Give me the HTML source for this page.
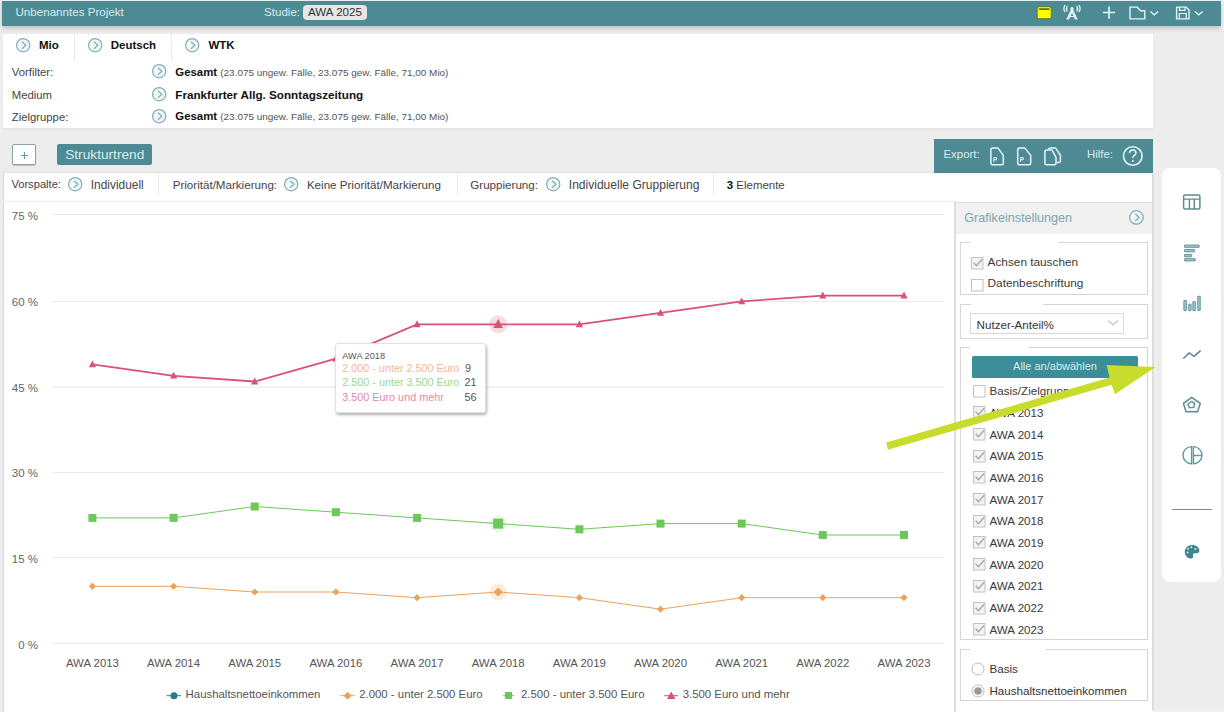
<!DOCTYPE html>
<html><head><meta charset="utf-8">
<style>
*{box-sizing:border-box;margin:0;padding:0}
html,body{width:1224px;height:712px;overflow:hidden;background:#ededed;font-family:"Liberation Sans",sans-serif;color:#333;position:relative;-webkit-font-smoothing:antialiased}
.tx{position:absolute;line-height:1;white-space:nowrap}
.bx{position:absolute}
</style></head><body>
<div class="bx" style="left:0px;top:0px;width:1224px;height:1px;background:#f2f7f7"></div>
<div class="bx" style="left:0px;top:0px;width:2px;height:30px;background:#eef3f3"></div>
<div class="bx" style="left:1221px;top:0px;width:3px;height:30px;background:#f0f5f5"></div>
<div class="bx" style="left:2px;top:1px;width:1219px;height:25px;background:#4e8a93;box-shadow:0 2px 5px rgba(0,0,0,0.22)"></div>
<div class="tx" style="left:15.5px;top:6.48px;font-size:11.6px;color:#d6ecef;font-weight:normal;">Unbenanntes Projekt</div>
<div class="tx" style="left:264px;top:6.48px;font-size:11.6px;color:#d6ecef;font-weight:normal;">Studie:</div>
<div class="bx" style="left:303px;top:5px;width:64px;height:15px;background:#e6e6e6;border-radius:4px"></div>
<div class="tx" style="left:135px;width:400px;text-align:center;top:6.48px;font-size:11.6px;color:#333;font-weight:normal;">AWA 2025</div>
<div class="bx" style="left:3px;top:33.6px;width:1150px;height:94.70000000000002px;background:#fff"></div>
<svg class="bx" style="left:15.3px;top:36.8px" width="16.4" height="16.4" viewBox="-8.2 -8.2 16.4 16.4"><circle r="6.6000000000000005" fill="#ecf8f9" stroke="#8cadb0" stroke-width="1.3"/><path d="M-1.15 -3.53 L2.66 0 L-1.15 3.53" fill="none" stroke="#8cadb0" stroke-width="1.3"/></svg>
<svg class="bx" style="left:86.6px;top:36.8px" width="16.4" height="16.4" viewBox="-8.2 -8.2 16.4 16.4"><circle r="6.6000000000000005" fill="#ecf8f9" stroke="#8cadb0" stroke-width="1.3"/><path d="M-1.15 -3.53 L2.66 0 L-1.15 3.53" fill="none" stroke="#8cadb0" stroke-width="1.3"/></svg>
<svg class="bx" style="left:184.20000000000002px;top:36.8px" width="16.4" height="16.4" viewBox="-8.2 -8.2 16.4 16.4"><circle r="6.6000000000000005" fill="#ecf8f9" stroke="#8cadb0" stroke-width="1.3"/><path d="M-1.15 -3.53 L2.66 0 L-1.15 3.53" fill="none" stroke="#8cadb0" stroke-width="1.3"/></svg>
<div class="tx" style="left:39px;top:39.67px;font-size:11.5px;color:#111;font-weight:bold;">Mio</div>
<div class="tx" style="left:110.7px;top:39.67px;font-size:11.5px;color:#111;font-weight:bold;">Deutsch</div>
<div class="tx" style="left:208.4px;top:39.67px;font-size:11.5px;color:#111;font-weight:bold;">WTK</div>
<div class="bx" style="left:73.5px;top:33px;width:1.0px;height:27px;background:#e8e8e8"></div>
<div class="bx" style="left:171.2px;top:33px;width:1.0px;height:27px;background:#e8e8e8"></div>
<div class="tx" style="left:11.8px;top:66.83px;font-size:11.3px;color:#444;font-weight:normal;">Vorfilter:</div>
<svg class="bx" style="left:150.70000000000002px;top:63.39999999999999px" width="16.4" height="16.4" viewBox="-8.2 -8.2 16.4 16.4"><circle r="6.6000000000000005" fill="#ecf8f9" stroke="#8cadb0" stroke-width="1.3"/><path d="M-1.15 -3.53 L2.66 0 L-1.15 3.53" fill="none" stroke="#8cadb0" stroke-width="1.3"/></svg>
<div class="tx" style="left:175.3px;top:66.55px;font-size:11.4px;color:#111;font-weight:normal;"><b style="color:#111">Gesamt</b> <span style="font-size:9.95px;color:#555">(23.075 ungew. Fälle, 23.075 gew. Fälle, 71,00 Mio)</span></div>
<div class="tx" style="left:11.8px;top:89.73px;font-size:11.3px;color:#444;font-weight:normal;">Medium</div>
<svg class="bx" style="left:150.70000000000002px;top:86.3px" width="16.4" height="16.4" viewBox="-8.2 -8.2 16.4 16.4"><circle r="6.6000000000000005" fill="#ecf8f9" stroke="#8cadb0" stroke-width="1.3"/><path d="M-1.15 -3.53 L2.66 0 L-1.15 3.53" fill="none" stroke="#8cadb0" stroke-width="1.3"/></svg>
<div class="tx" style="left:175.3px;top:89.20px;font-size:11.7px;color:#111;font-weight:normal;"><b style="color:#111">Frankfurter Allg. Sonntagszeitung</b></div>
<div class="tx" style="left:11.8px;top:111.63px;font-size:11.3px;color:#444;font-weight:normal;">Zielgruppe:</div>
<svg class="bx" style="left:150.70000000000002px;top:108.19999999999999px" width="16.4" height="16.4" viewBox="-8.2 -8.2 16.4 16.4"><circle r="6.6000000000000005" fill="#ecf8f9" stroke="#8cadb0" stroke-width="1.3"/><path d="M-1.15 -3.53 L2.66 0 L-1.15 3.53" fill="none" stroke="#8cadb0" stroke-width="1.3"/></svg>
<div class="tx" style="left:175.3px;top:111.35px;font-size:11.4px;color:#111;font-weight:normal;"><b style="color:#111">Gesamt</b> <span style="font-size:9.95px;color:#555">(23.075 ungew. Fälle, 23.075 gew. Fälle, 71,00 Mio)</span></div>
<div class="bx" style="left:3px;top:128.3px;width:1150px;height:2.6999999999999886px;background:linear-gradient(#e3e3e3,#ededed)"></div>
<div class="bx" style="left:3px;top:169.5px;width:931px;height:3.9000000000000057px;background:linear-gradient(#ededed,#e2e2e2)"></div>
<div class="bx" style="left:12px;top:144px;width:24px;height:21px;background:#fff;border:1px solid #8aa3a6;border-radius:2px;box-shadow:0 1px 1px rgba(0,0,0,0.2)"></div>
<svg class="bx" style="left:20px;top:151px" width="9" height="9" viewBox="0 0 9 9"><path d="M4.5 1 V8 M1 4.5 H8" stroke="#6e9aa0" stroke-width="1.1"/></svg>
<div class="bx" style="left:57px;top:144px;width:94.5px;height:21px;background:#4e8a93;border-radius:2px"></div>
<div class="tx" style="left:65.2px;top:147.50px;font-size:13.7px;color:#d6ecef;font-weight:normal;">Strukturtrend</div>
<div class="bx" style="left:934px;top:138.5px;width:219px;height:34.0px;background:#4e8a93"></div>
<div class="tx" style="left:943.5px;top:149.05px;font-size:11.4px;color:#d6ecef;font-weight:normal;">Export:</div>
<div class="tx" style="left:1087px;top:149.05px;font-size:11.4px;color:#d6ecef;font-weight:normal;">Hilfe:</div>
<div class="bx" style="left:3px;top:173.4px;width:1149px;height:538.6px;background:#fff;border-left:1px solid #d8d8d8"></div>
<div class="bx" style="left:1152px;top:173.4px;width:7px;height:538.6px;background:linear-gradient(90deg,#dcdcdc 0,#dcdcdc 1.5px,#efefef 2px,#efefef 6px,#e9e9e9 6.5px)"></div>
<div class="bx" style="left:3px;top:200.5px;width:952px;height:1.0px;background:#ebebeb"></div>
<div class="tx" style="left:11.4px;top:179.46px;font-size:11.15px;color:#444;font-weight:normal;">Vorspalte:</div>
<svg class="bx" style="left:66.8px;top:176.10000000000002px" width="16.4" height="16.4" viewBox="-8.2 -8.2 16.4 16.4"><circle r="6.6000000000000005" fill="#ecf8f9" stroke="#8cadb0" stroke-width="1.3"/><path d="M-1.15 -3.53 L2.66 0 L-1.15 3.53" fill="none" stroke="#8cadb0" stroke-width="1.3"/></svg>
<div class="tx" style="left:90.8px;top:179.53px;font-size:11.9px;color:#444;font-weight:normal;">Individuell</div>
<div class="bx" style="left:158px;top:173px;width:1px;height:23px;background:#ebebeb"></div>
<div class="tx" style="left:172.7px;top:179.08px;font-size:11.6px;color:#444;font-weight:normal;">Priorität/Markierung:</div>
<svg class="bx" style="left:282.8px;top:176.10000000000002px" width="16.4" height="16.4" viewBox="-8.2 -8.2 16.4 16.4"><circle r="6.6000000000000005" fill="#ecf8f9" stroke="#8cadb0" stroke-width="1.3"/><path d="M-1.15 -3.53 L2.66 0 L-1.15 3.53" fill="none" stroke="#8cadb0" stroke-width="1.3"/></svg>
<div class="tx" style="left:306.9px;top:179.08px;font-size:11.6px;color:#444;font-weight:normal;">Keine Priorität/Markierung</div>
<div class="bx" style="left:456.5px;top:173px;width:1.0px;height:23px;background:#ebebeb"></div>
<div class="tx" style="left:470.3px;top:179.08px;font-size:11.6px;color:#444;font-weight:normal;">Gruppierung:</div>
<svg class="bx" style="left:545.0px;top:176.10000000000002px" width="16.4" height="16.4" viewBox="-8.2 -8.2 16.4 16.4"><circle r="6.6000000000000005" fill="#ecf8f9" stroke="#8cadb0" stroke-width="1.3"/><path d="M-1.15 -3.53 L2.66 0 L-1.15 3.53" fill="none" stroke="#8cadb0" stroke-width="1.3"/></svg>
<div class="tx" style="left:568.8px;top:178.70px;font-size:12.05px;color:#444;font-weight:normal;">Individuelle Gruppierung</div>
<div class="bx" style="left:713px;top:173px;width:1px;height:23px;background:#ebebeb"></div>
<div class="tx" style="left:726.8px;top:179.91px;font-size:11.45px;color:#444;font-weight:normal;"><b style="color:#111">3</b> Elemente</div>
<svg class="bx" style="left:0;top:0" width="1224" height="712" viewBox="0 0 1224 712">
<line x1="52" x2="944" y1="643.5" y2="643.5" stroke="#e8e8e8" stroke-width="1"/>
<line x1="52" x2="944" y1="557.7" y2="557.7" stroke="#e8e8e8" stroke-width="1"/>
<line x1="52" x2="944" y1="472.4" y2="472.4" stroke="#e8e8e8" stroke-width="1"/>
<line x1="52" x2="944" y1="387.2" y2="387.2" stroke="#e8e8e8" stroke-width="1"/>
<line x1="52" x2="944" y1="301.4" y2="301.4" stroke="#e8e8e8" stroke-width="1"/>
<line x1="52" x2="944" y1="214.5" y2="214.5" stroke="#e8e8e8" stroke-width="1"/>
<circle cx="498.2" cy="324.3" r="9" fill="#e45a7a" fill-opacity="0.22"/>
<circle cx="498.2" cy="523.6" r="8.5" fill="#7fd36a" fill-opacity="0.15"/>
<circle cx="498.2" cy="592.0" r="8.5" fill="#f0a860" fill-opacity="0.22"/>
<polyline points="92.4,586.3 173.6,586.3 254.7,592.0 335.9,592.0 417.0,597.7 498.2,592.0 579.4,597.7 660.5,609.2 741.7,597.7 822.8,597.7 904.0,597.7" fill="none" stroke="#eca25a" stroke-width="1"/>
<polyline points="92.4,517.9 173.6,517.9 254.7,506.5 335.9,512.2 417.0,517.9 498.2,523.6 579.4,529.3 660.5,523.6 741.7,523.6 822.8,535.0 904.0,535.0" fill="none" stroke="#6cc85a" stroke-width="1"/>
<polyline points="92.4,364.3 173.6,375.8 254.7,381.5 335.9,358.6 417.0,324.3 498.2,324.3 579.4,324.3 660.5,312.8 741.7,301.4 822.8,295.6 904.0,295.6" fill="none" stroke="#d8527a" stroke-width="1.8"/>
<path d="M92.4 582.7 L96.0 586.3 L92.4 589.9 L88.8 586.3Z" fill="#eca25a"/>
<path d="M173.6 582.7 L177.2 586.3 L173.6 589.9 L170.0 586.3Z" fill="#eca25a"/>
<path d="M254.7 588.4 L258.3 592.0 L254.7 595.6 L251.1 592.0Z" fill="#eca25a"/>
<path d="M335.9 588.4 L339.5 592.0 L335.9 595.6 L332.3 592.0Z" fill="#eca25a"/>
<path d="M417.0 594.1 L420.6 597.7 L417.0 601.3 L413.4 597.7Z" fill="#eca25a"/>
<path d="M498.2 587.4 L502.8 592.0 L498.2 596.6 L493.6 592.0Z" fill="#eca25a"/>
<path d="M579.4 594.1 L583.0 597.7 L579.4 601.3 L575.8 597.7Z" fill="#eca25a"/>
<path d="M660.5 605.6 L664.1 609.2 L660.5 612.8 L656.9 609.2Z" fill="#eca25a"/>
<path d="M741.7 594.1 L745.3 597.7 L741.7 601.3 L738.1 597.7Z" fill="#eca25a"/>
<path d="M822.8 594.1 L826.4 597.7 L822.8 601.3 L819.2 597.7Z" fill="#eca25a"/>
<path d="M904.0 594.1 L907.6 597.7 L904.0 601.3 L900.4 597.7Z" fill="#eca25a"/>
<rect x="88.4" y="513.9" width="8" height="8" fill="#6cc85a"/>
<rect x="169.6" y="513.9" width="8" height="8" fill="#6cc85a"/>
<rect x="250.7" y="502.5" width="8" height="8" fill="#6cc85a"/>
<rect x="331.9" y="508.2" width="8" height="8" fill="#6cc85a"/>
<rect x="413.0" y="513.9" width="8" height="8" fill="#6cc85a"/>
<rect x="493.2" y="518.6" width="10" height="10" fill="#6cc85a"/>
<rect x="575.4" y="525.3" width="8" height="8" fill="#6cc85a"/>
<rect x="656.5" y="519.6" width="8" height="8" fill="#6cc85a"/>
<rect x="737.7" y="519.6" width="8" height="8" fill="#6cc85a"/>
<rect x="818.8" y="531.0" width="8" height="8" fill="#6cc85a"/>
<rect x="900.0" y="531.0" width="8" height="8" fill="#6cc85a"/>
<path d="M92.4 360.4 L96.0 367.2 L88.8 367.2Z" fill="#d8527a"/>
<path d="M173.6 371.8 L177.2 378.6 L170.0 378.6Z" fill="#d8527a"/>
<path d="M254.7 377.5 L258.3 384.4 L251.1 384.4Z" fill="#d8527a"/>
<path d="M335.9 354.6 L339.5 361.5 L332.3 361.5Z" fill="#d8527a"/>
<path d="M417.0 320.3 L420.6 327.2 L413.4 327.2Z" fill="#d8527a"/>
<path d="M498.2 319.0 L503.0 328.1 L493.4 328.1Z" fill="#d8527a"/>
<path d="M579.4 320.3 L583.0 327.2 L575.8 327.2Z" fill="#d8527a"/>
<path d="M660.5 308.9 L664.1 315.7 L656.9 315.7Z" fill="#d8527a"/>
<path d="M741.7 297.4 L745.3 304.3 L738.1 304.3Z" fill="#d8527a"/>
<path d="M822.8 291.6 L826.4 298.5 L819.2 298.5Z" fill="#d8527a"/>
<path d="M904.0 291.6 L907.6 298.5 L900.4 298.5Z" fill="#d8527a"/>
</svg>
<div class="tx" style="left:-362px;width:400px;text-align:right;top:639.57px;font-size:11.5px;color:#666;font-weight:normal;">0 %</div>
<div class="tx" style="left:-362px;width:400px;text-align:right;top:553.77px;font-size:11.5px;color:#666;font-weight:normal;">15 %</div>
<div class="tx" style="left:-362px;width:400px;text-align:right;top:468.47px;font-size:11.5px;color:#666;font-weight:normal;">30 %</div>
<div class="tx" style="left:-362px;width:400px;text-align:right;top:383.27px;font-size:11.5px;color:#666;font-weight:normal;">45 %</div>
<div class="tx" style="left:-362px;width:400px;text-align:right;top:297.47px;font-size:11.5px;color:#666;font-weight:normal;">60 %</div>
<div class="tx" style="left:-362px;width:400px;text-align:right;top:210.57px;font-size:11.5px;color:#666;font-weight:normal;">75 %</div>
<div class="tx" style="left:-107.6px;width:400px;text-align:center;top:658.15px;font-size:11.4px;color:#555;font-weight:normal;">AWA 2013</div>
<div class="tx" style="left:-26.439999999999998px;width:400px;text-align:center;top:658.15px;font-size:11.4px;color:#555;font-weight:normal;">AWA 2014</div>
<div class="tx" style="left:54.72px;width:400px;text-align:center;top:658.15px;font-size:11.4px;color:#555;font-weight:normal;">AWA 2015</div>
<div class="tx" style="left:135.88px;width:400px;text-align:center;top:658.15px;font-size:11.4px;color:#555;font-weight:normal;">AWA 2016</div>
<div class="tx" style="left:217.03999999999996px;width:400px;text-align:center;top:658.15px;font-size:11.4px;color:#555;font-weight:normal;">AWA 2017</div>
<div class="tx" style="left:298.19999999999993px;width:400px;text-align:center;top:658.15px;font-size:11.4px;color:#555;font-weight:normal;">AWA 2018</div>
<div class="tx" style="left:379.36px;width:400px;text-align:center;top:658.15px;font-size:11.4px;color:#555;font-weight:normal;">AWA 2019</div>
<div class="tx" style="left:460.52px;width:400px;text-align:center;top:658.15px;font-size:11.4px;color:#555;font-weight:normal;">AWA 2020</div>
<div class="tx" style="left:541.68px;width:400px;text-align:center;top:658.15px;font-size:11.4px;color:#555;font-weight:normal;">AWA 2021</div>
<div class="tx" style="left:622.8399999999999px;width:400px;text-align:center;top:658.15px;font-size:11.4px;color:#555;font-weight:normal;">AWA 2022</div>
<div class="tx" style="left:703.9999999999999px;width:400px;text-align:center;top:658.15px;font-size:11.4px;color:#555;font-weight:normal;">AWA 2023</div>
<svg class="bx" style="left:160px;top:685px" width="530" height="20" viewBox="160 685 530 20"><line x1="166.5" x2="181" y1="695.7" y2="695.7" stroke="#2d7a85" stroke-width="1"/><circle cx="174" cy="695.7" r="3.5" fill="#2d7a85"/><line x1="340.4" x2="354.8" y1="695.7" y2="695.7" stroke="#eca25a" stroke-width="1"/><path d="M347.6 691.7 L351.6 695.7 L347.6 699.7 L343.6 695.7Z" fill="#eca25a"/><line x1="503" x2="514" y1="695.7" y2="695.7" stroke="#6cc85a" stroke-width="1"/><rect x="505" y="692" width="7" height="7" fill="#6cc85a"/><line x1="664.4" x2="678" y1="695.7" y2="695.7" stroke="#d8527a" stroke-width="1"/><path d="M671.2 691.5 L675.5 699 L667 699Z" fill="#d8527a"/></svg>
<div class="tx" style="left:185.6px;top:689.35px;font-size:11.4px;color:#555;font-weight:normal;">Haushaltsnettoeinkommen</div>
<div class="tx" style="left:359.2px;top:689.35px;font-size:11.4px;color:#555;font-weight:normal;">2.000 - unter 2.500 Euro</div>
<div class="tx" style="left:521px;top:689.35px;font-size:11.4px;color:#555;font-weight:normal;">2.500 - unter 3.500 Euro</div>
<div class="tx" style="left:682.7px;top:689.35px;font-size:11.4px;color:#555;font-weight:normal;">3.500 Euro und mehr</div>
<div class="bx" style="left:334.5px;top:343px;width:151.0px;height:69.5px;background:rgba(255,255,255,0.96);border:1px solid #e2e2e2;border-radius:3px;box-shadow:1px 2px 3px rgba(0,0,0,0.3)"></div>
<div class="tx" style="left:342.3px;top:352.01px;font-size:9.2px;color:#555;font-weight:normal;">AWA 2018</div>
<div class="tx" style="left:342.3px;top:362.86px;font-size:10.8px;color:#f4b98c;font-weight:normal;">2.000 - unter 2.500 Euro</div>
<div class="tx" style="left:342.3px;top:377.46px;font-size:10.8px;color:#9ad98a;font-weight:normal;">2.500 - unter 3.500 Euro</div>
<div class="tx" style="left:342.3px;top:391.86px;font-size:10.8px;color:#e48aa3;font-weight:normal;">3.500 Euro und mehr</div>
<div class="tx" style="left:465px;top:362.86px;font-size:10.8px;color:#555;font-weight:normal;">9</div>
<div class="tx" style="left:464.5px;top:377.46px;font-size:10.8px;color:#555;font-weight:normal;">21</div>
<div class="tx" style="left:464.5px;top:391.86px;font-size:10.8px;color:#555;font-weight:normal;">56</div>
<div class="bx" style="left:954px;top:201px;width:2px;height:511px;background:#dedede"></div>
<div class="bx" style="left:956px;top:201.5px;width:196px;height:32.5px;background:#f1f1f1;border-top:1px solid #e2e2e2"></div>
<div class="tx" style="left:964.3px;top:212.23px;font-size:12.6px;color:#7ba6ab;font-weight:normal;">Grafikeinstellungen</div>
<svg class="bx" style="left:1127.8999999999999px;top:209.1px" width="16.8" height="16.8" viewBox="-8.4 -8.4 16.8 16.8"><circle r="6.800000000000001" fill="#ecf8f9" stroke="#8cadb0" stroke-width="1.3"/><path d="M-1.18 -3.63 L2.74 0 L-1.18 3.63" fill="none" stroke="#8cadb0" stroke-width="1.3"/></svg>
<div class="bx" style="left:960.3px;top:242.3px;width:187.70000000000005px;height:53.19999999999999px;border:1px solid #d6d6d6"></div>
<div class="bx" style="left:969.7px;top:241.3px;width:88.0px;height:3.0px;background:#fff"></div>
<div class="bx" style="left:960.3px;top:303.9px;width:187.70000000000005px;height:35.10000000000002px;border:1px solid #d6d6d6"></div>
<div class="bx" style="left:970.6px;top:302.9px;width:72.89999999999998px;height:3.0px;background:#fff"></div>
<div class="bx" style="left:960.3px;top:347.3px;width:187.70000000000005px;height:292.7px;border:1px solid #d6d6d6"></div>
<div class="bx" style="left:970px;top:346.3px;width:58px;height:3.0px;background:#fff"></div>
<div class="bx" style="left:960.3px;top:649.2px;width:187.70000000000005px;height:52.299999999999955px;border:1px solid #d6d6d6"></div>
<div class="bx" style="left:969.5px;top:648.2px;width:76.79999999999995px;height:3.0px;background:#fff"></div>
<svg class="bx" style="left:971px;top:257px" width="13" height="13" viewBox="0 0 13 13"><rect x="0.5" y="0.5" width="11.5" height="11.5" fill="#f3f3f3" stroke="#c2c2c2" stroke-width="1"/><path d="M2.6 5.8 L5.4 8.8 L11.2 2.2" fill="none" stroke="#a8a8a8" stroke-width="1.4"/></svg>
<div class="tx" style="left:987.6px;top:256.51px;font-size:11.8px;color:#3a3a3a;font-weight:normal;">Achsen tauschen</div>
<svg class="bx" style="left:971px;top:278.6px" width="13" height="13" viewBox="0 0 13 13"><rect x="0.5" y="0.5" width="11.5" height="11.5" fill="#fff" stroke="#c2c2c2" stroke-width="1"/></svg>
<div class="tx" style="left:987.6px;top:278.11px;font-size:11.8px;color:#3a3a3a;font-weight:normal;">Datenbeschriftung</div>
<div class="bx" style="left:970.2px;top:312.7px;width:153.39999999999986px;height:20.900000000000034px;border:1px solid #d9d9d9"></div>
<div class="tx" style="left:976.6px;top:319.48px;font-size:11.6px;color:#333;font-weight:normal;">Nutzer-Anteil%</div>
<svg class="bx" style="left:1107px;top:319px" width="12" height="8" viewBox="0 0 12 8"><path d="M1 1.5 L6 6 L11 1.5" fill="none" stroke="#c4c4c4" stroke-width="1.2"/></svg>
<div class="bx" style="left:972px;top:356px;width:166px;height:21.5px;background:#3b8d97;border-radius:1.5px"></div>
<div class="tx" style="left:855px;width:400px;text-align:center;top:361.29px;font-size:11px;color:#d4ecef;font-weight:normal;">Alle an/abwählen</div>
<svg class="bx" style="left:972.6px;top:384.5px" width="13" height="13" viewBox="0 0 13 13"><rect x="0.5" y="0.5" width="11.5" height="11.5" fill="#fff" stroke="#c2c2c2" stroke-width="1"/></svg>
<div class="tx" style="left:989.5px;top:385.18px;font-size:11.6px;color:#3a3a3a;font-weight:normal;">Basis/Zielgruppe</div>
<svg class="bx" style="left:972.6px;top:406.2px" width="13" height="13" viewBox="0 0 13 13"><rect x="0.5" y="0.5" width="11.5" height="11.5" fill="#f3f3f3" stroke="#c2c2c2" stroke-width="1"/><path d="M2.6 5.8 L5.4 8.8 L11.2 2.2" fill="none" stroke="#a8a8a8" stroke-width="1.4"/></svg>
<div class="tx" style="left:989.5px;top:406.88px;font-size:11.6px;color:#3a3a3a;font-weight:normal;">AWA 2013</div>
<svg class="bx" style="left:972.6px;top:427.9px" width="13" height="13" viewBox="0 0 13 13"><rect x="0.5" y="0.5" width="11.5" height="11.5" fill="#f3f3f3" stroke="#c2c2c2" stroke-width="1"/><path d="M2.6 5.8 L5.4 8.8 L11.2 2.2" fill="none" stroke="#a8a8a8" stroke-width="1.4"/></svg>
<div class="tx" style="left:989.5px;top:428.58px;font-size:11.6px;color:#3a3a3a;font-weight:normal;">AWA 2014</div>
<svg class="bx" style="left:972.6px;top:449.6px" width="13" height="13" viewBox="0 0 13 13"><rect x="0.5" y="0.5" width="11.5" height="11.5" fill="#f3f3f3" stroke="#c2c2c2" stroke-width="1"/><path d="M2.6 5.8 L5.4 8.8 L11.2 2.2" fill="none" stroke="#a8a8a8" stroke-width="1.4"/></svg>
<div class="tx" style="left:989.5px;top:450.28px;font-size:11.6px;color:#3a3a3a;font-weight:normal;">AWA 2015</div>
<svg class="bx" style="left:972.6px;top:471.3px" width="13" height="13" viewBox="0 0 13 13"><rect x="0.5" y="0.5" width="11.5" height="11.5" fill="#f3f3f3" stroke="#c2c2c2" stroke-width="1"/><path d="M2.6 5.8 L5.4 8.8 L11.2 2.2" fill="none" stroke="#a8a8a8" stroke-width="1.4"/></svg>
<div class="tx" style="left:989.5px;top:471.98px;font-size:11.6px;color:#3a3a3a;font-weight:normal;">AWA 2016</div>
<svg class="bx" style="left:972.6px;top:493.0px" width="13" height="13" viewBox="0 0 13 13"><rect x="0.5" y="0.5" width="11.5" height="11.5" fill="#f3f3f3" stroke="#c2c2c2" stroke-width="1"/><path d="M2.6 5.8 L5.4 8.8 L11.2 2.2" fill="none" stroke="#a8a8a8" stroke-width="1.4"/></svg>
<div class="tx" style="left:989.5px;top:493.68px;font-size:11.6px;color:#3a3a3a;font-weight:normal;">AWA 2017</div>
<svg class="bx" style="left:972.6px;top:514.7px" width="13" height="13" viewBox="0 0 13 13"><rect x="0.5" y="0.5" width="11.5" height="11.5" fill="#f3f3f3" stroke="#c2c2c2" stroke-width="1"/><path d="M2.6 5.8 L5.4 8.8 L11.2 2.2" fill="none" stroke="#a8a8a8" stroke-width="1.4"/></svg>
<div class="tx" style="left:989.5px;top:515.38px;font-size:11.6px;color:#3a3a3a;font-weight:normal;">AWA 2018</div>
<svg class="bx" style="left:972.6px;top:536.4px" width="13" height="13" viewBox="0 0 13 13"><rect x="0.5" y="0.5" width="11.5" height="11.5" fill="#f3f3f3" stroke="#c2c2c2" stroke-width="1"/><path d="M2.6 5.8 L5.4 8.8 L11.2 2.2" fill="none" stroke="#a8a8a8" stroke-width="1.4"/></svg>
<div class="tx" style="left:989.5px;top:537.08px;font-size:11.6px;color:#3a3a3a;font-weight:normal;">AWA 2019</div>
<svg class="bx" style="left:972.6px;top:558.1px" width="13" height="13" viewBox="0 0 13 13"><rect x="0.5" y="0.5" width="11.5" height="11.5" fill="#f3f3f3" stroke="#c2c2c2" stroke-width="1"/><path d="M2.6 5.8 L5.4 8.8 L11.2 2.2" fill="none" stroke="#a8a8a8" stroke-width="1.4"/></svg>
<div class="tx" style="left:989.5px;top:558.78px;font-size:11.6px;color:#3a3a3a;font-weight:normal;">AWA 2020</div>
<svg class="bx" style="left:972.6px;top:579.8px" width="13" height="13" viewBox="0 0 13 13"><rect x="0.5" y="0.5" width="11.5" height="11.5" fill="#f3f3f3" stroke="#c2c2c2" stroke-width="1"/><path d="M2.6 5.8 L5.4 8.8 L11.2 2.2" fill="none" stroke="#a8a8a8" stroke-width="1.4"/></svg>
<div class="tx" style="left:989.5px;top:580.48px;font-size:11.6px;color:#3a3a3a;font-weight:normal;">AWA 2021</div>
<svg class="bx" style="left:972.6px;top:601.5px" width="13" height="13" viewBox="0 0 13 13"><rect x="0.5" y="0.5" width="11.5" height="11.5" fill="#f3f3f3" stroke="#c2c2c2" stroke-width="1"/><path d="M2.6 5.8 L5.4 8.8 L11.2 2.2" fill="none" stroke="#a8a8a8" stroke-width="1.4"/></svg>
<div class="tx" style="left:989.5px;top:602.18px;font-size:11.6px;color:#3a3a3a;font-weight:normal;">AWA 2022</div>
<svg class="bx" style="left:972.6px;top:623.2px" width="13" height="13" viewBox="0 0 13 13"><rect x="0.5" y="0.5" width="11.5" height="11.5" fill="#f3f3f3" stroke="#c2c2c2" stroke-width="1"/><path d="M2.6 5.8 L5.4 8.8 L11.2 2.2" fill="none" stroke="#a8a8a8" stroke-width="1.4"/></svg>
<div class="tx" style="left:989.5px;top:623.88px;font-size:11.6px;color:#3a3a3a;font-weight:normal;">AWA 2023</div>
<svg class="bx" style="left:971.4px;top:661.7px" width="14" height="14" viewBox="-7 -7 14 14"><circle r="6" fill="#fff" stroke="#bdbdbd" stroke-width="1"/></svg>
<div class="tx" style="left:989.5px;top:662.98px;font-size:11.6px;color:#333;font-weight:normal;">Basis</div>
<svg class="bx" style="left:971.4px;top:684px" width="14" height="14" viewBox="-7 -7 14 14"><circle r="6" fill="#fff" stroke="#bdbdbd" stroke-width="1"/><circle r="3.8" fill="#9a9a9a"/></svg>
<div class="tx" style="left:989.5px;top:685.18px;font-size:11.6px;color:#333;font-weight:normal;">Haushaltsnettoeinkommen</div>
<div class="bx" style="left:1162px;top:168px;width:59px;height:414px;background:#fff;border-radius:8px"></div>
<div class="bx" style="left:1171.5px;top:508.5px;width:40.5px;height:1.5px;background:#888"></div>
<svg class="bx" style="left:0;top:0" width="1224" height="712" viewBox="0 0 1224 712"><path d="M886.2 442.5 L1109.6 377.6 L1106.5 365.1 L1155.7 366.9 L1114.9 394.2 L1111.7 384.8 L887.9 449.7Z" fill="#c8dd2b"/></svg>
<svg class="bx" style="left:0;top:0" width="1224" height="712" viewBox="0 0 1224 712">
<rect x="1037.2" y="6.7" width="14" height="12" rx="2" fill="#ffff00" stroke="#6d7a22" stroke-width="1"/>
<rect x="1039" y="8.3" width="10.5" height="1.6" fill="#4f5f2a"/>
<path d="M1066.3 19.6 L1071 9.2 L1073 9.2 L1077.7 19.6 L1075 19.6 L1072 12.8 L1069 19.6Z" fill="#e2f6f8"/>
<circle cx="1072" cy="8.6" r="1.6" fill="#e2f6f8"/>
<line x1="1069.6" x2="1074.4" y1="16.6" y2="16.6" stroke="#e2f6f8" stroke-width="1.1"/>
<path d="M1067.2 5.8 Q1065.6 8.6 1067.2 11.4 M1065 5.2 Q1062.8 8.6 1065 12" fill="none" stroke="#e2f6f8" stroke-width="1.3"/>
<path d="M1076.8 5.8 Q1078.4 8.6 1076.8 11.4 M1079 5.2 Q1081.2 8.6 1079 12" fill="none" stroke="#e2f6f8" stroke-width="1.3"/>
<path d="M1109 6.4 V18.7 M1102.8 12.5 H1115.1" stroke="#e2f6f8" stroke-width="1.6"/>
<path d="M1130 7.1 H1137 L1140.5 10.8 H1144.8 V18.9 H1130Z" fill="none" stroke="#e2f6f8" stroke-width="1.4" stroke-linejoin="round"/>
<path d="M1150.4 11.4 L1154.3 14.8 L1158.2 11.4" fill="none" stroke="#e2f6f8" stroke-width="1.3"/>
<path d="M1176.6 7.1 H1186 L1189 10.1 V18.9 H1176.6Z" fill="none" stroke="#e2f6f8" stroke-width="1.4" stroke-linejoin="round"/>
<path d="M1179.5 7.1 V10.3 H1185 V7.1" fill="none" stroke="#e2f6f8" stroke-width="1.2"/>
<path d="M1179.3 18.9 V13.5 H1186.3 V18.9" fill="none" stroke="#e2f6f8" stroke-width="1.2"/>
<path d="M1194.9 11.4 L1198.8 14.8 L1202.7 11.4" fill="none" stroke="#e2f6f8" stroke-width="1.3"/>
<path d="M992.9 147.9 H997.9 L1003.3 155.4 V163.3 Q1003.3 164.8 1001.8 164.8 H992.4 Q990.9 164.8 990.9 163.3 V149.9 Q990.9 147.9 992.9 147.9Z" fill="none" stroke="#e2f6f8" stroke-width="1.5" stroke-linejoin="round"/>
<path d="M993.8 162 V157.6 H996.5 V159.8 H994" fill="none" stroke="#e2f6f8" stroke-width="1"/>
<path d="M1019.7 147.9 H1024.7 L1030.7 155.4 V163.3 Q1030.7 164.8 1029.2 164.8 H1019.2 Q1017.7 164.8 1017.7 163.3 V149.9 Q1017.7 147.9 1019.7 147.9Z" fill="none" stroke="#e2f6f8" stroke-width="1.5" stroke-linejoin="round"/>
<path d="M1020.6 162 V157.6 H1023.3 V159.8 H1020.8" fill="none" stroke="#e2f6f8" stroke-width="1"/>
<path d="M1050.5 147.9 H1055.5 L1060.4 155.4 V161.1 Q1060.4 162.6 1058.9 162.6 H1050.0 Q1048.5 162.6 1048.5 161.1 V149.9 Q1048.5 147.9 1050.5 147.9Z" fill="none" stroke="#e2f6f8" stroke-width="1.5" stroke-linejoin="round"/>
<rect x="1044.4" y="149.5" width="11.8" height="15.5" fill="#4e8a93"/>
<path d="M1046.9 149.9 H1051.9 L1056 157.4 V163.3 Q1056 164.8 1054.5 164.8 H1046.4 Q1044.9 164.8 1044.9 163.3 V151.9 Q1044.9 149.9 1046.9 149.9Z" fill="none" stroke="#e2f6f8" stroke-width="1.5" stroke-linejoin="round"/>
<circle cx="1132.8" cy="156" r="9.3" fill="none" stroke="#e2f6f8" stroke-width="1.6"/>
<path d="M1129.6 153.3 Q1129.6 149.9 1132.8 149.9 Q1136 149.9 1136 153 Q1136 155 1133.6 156 Q1132.8 156.6 1132.8 158.3" fill="none" stroke="#e2f6f8" stroke-width="1.5"/>
<circle cx="1132.8" cy="161" r="0.95" fill="#e2f6f8"/>
<rect x="1183.6" y="194.9" width="16.3" height="14" rx="1.5" fill="none" stroke="#5e8a90" stroke-width="1.5"/>
<path d="M1183.6 199.1 H1199.9 M1189.4 199.1 V208.9 M1194.3 199.1 V208.9" stroke="#5e8a90" stroke-width="1.4"/>
<rect x="1184.5" y="245.1" width="14.7" height="2.2" rx="0.3" fill="#a6cbd0" stroke="#64909a" stroke-width="1"/>
<rect x="1184.5" y="249.6" width="10.0" height="2.2" rx="0.3" fill="#a6cbd0" stroke="#64909a" stroke-width="1"/>
<rect x="1184.5" y="254.6" width="7.2" height="2.2" rx="0.3" fill="#a6cbd0" stroke="#64909a" stroke-width="1"/>
<rect x="1184.5" y="258.7" width="10.8" height="2.2" rx="0.3" fill="#a6cbd0" stroke="#64909a" stroke-width="1"/>
<rect x="1183.9" y="300.5" width="2.4" height="10.1" rx="0.3" fill="#a6cbd0" stroke="#64909a" stroke-width="1"/>
<rect x="1188.7" y="304.2" width="2.4" height="6.4" rx="0.3" fill="#a6cbd0" stroke="#64909a" stroke-width="1"/>
<rect x="1192.9" y="301.5" width="2.4" height="9.1" rx="0.3" fill="#a6cbd0" stroke="#64909a" stroke-width="1"/>
<rect x="1197.8" y="296.3" width="2.4" height="14.3" rx="0.3" fill="#a6cbd0" stroke="#64909a" stroke-width="1"/>
<path d="M1183.3 358.6 L1189.2 353 L1194 356.3 L1200.6 350.6" fill="none" stroke="#667f84" stroke-width="1.4"/>
<path d="M1191.7 397.3 L1200.3 403.4 L1197.6 411.8 L1186 411.8 L1183.4 403.4Z" fill="#f2fafb" stroke="#5e8a90" stroke-width="1.5" stroke-linejoin="round"/>
<path d="M1191.8 401.5 L1194.5 403.4 L1193.8 407.3 L1189.5 407.6 L1187.8 404Z" fill="none" stroke="#5e8a90" stroke-width="1.3" stroke-linejoin="round"/>
<path d="M1191.6 446.6 A8.6 8.6 0 0 0 1191.6 463.8 Z" fill="none" stroke="#5d9aa1" stroke-width="1.4"/>
<path d="M1193.4 446.6 A8.6 8.6 0 0 1 1193.4 463.8 Z M1193.4 455.5 H1202" fill="none" stroke="#5d9aa1" stroke-width="1.4"/>
<path d="M1192 544.9 C1196.5 544.9 1199.4 547.6 1199.4 550.4 C1199.4 552.6 1197.9 553.2 1196.1 553.2 L1194.5 553.2 C1193 553.2 1192.5 554.4 1193 555.5 C1193.5 556.8 1193 558.6 1191 558.6 C1187.5 558.6 1184.8 555.6 1184.8 551.8 C1184.8 547.9 1187.8 544.9 1192 544.9Z" fill="#3f8690"/>
<circle cx="1188" cy="548.8" r="1" fill="#c8eef2"/>
<circle cx="1191.4" cy="547.3" r="1" fill="#c8eef2"/>
<circle cx="1195.4" cy="549" r="1" fill="#c8eef2"/>
<circle cx="1187.6" cy="552.6" r="1" fill="#c8eef2"/>
</svg>
<div class="bx" style="left:1152px;top:710px;width:72px;height:2px;background:#f2f2f2"></div>
</body></html>
